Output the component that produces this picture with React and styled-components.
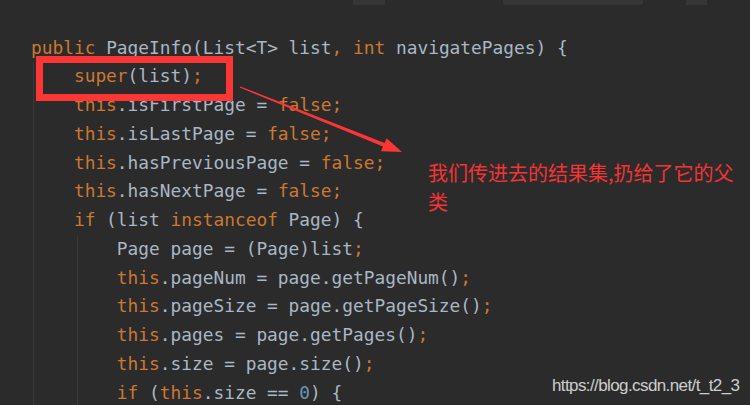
import styled, { createGlobalStyle } from 'styled-components';

const GlobalStyle = createGlobalStyle`
  html, body {
    margin: 0;
    padding: 0;
    background: #2b2b2b;
  }
`;

const Editor = styled.div`
  position: relative;
  width: 750px;
  height: 405px;
  overflow: hidden;
  background: #2b2b2b;
  padding-left: 31px;
  box-sizing: border-box;
`;

const Code = styled.div`
  margin-top: -24px;
  font-family: "DejaVu Sans Mono", "Liberation Mono", monospace;
  font-size: 17.84px;
  line-height: 28.75px;
  color: #a9b7c6;
  white-space: pre;
`;

const Line = styled.div`
  height: 28.75px;
`;

const Block = styled.div`
  margin-left: ${(p) => p.$offset}px;
  padding-left: calc(4ch - ${(p) => p.$offset + 1}px);
  border-left: 1px solid #383838;
`;

const Kw = styled.span`
  color: #cc7832;
`;

const Num = styled.span`
  color: #6897bb;
`;

const Usage = styled.span`
  display: inline-block;
  height: 28.75px;
  vertical-align: top;
  background: #363636;
  border-radius: ${(p) => (p.$round ? '3px' : '0')};
`;

const Frame = styled.div`
  position: absolute;
  left: 36px;
  top: 56px;
  width: 197px;
  height: 45px;
  border: 7px solid #fc3535;
  box-sizing: border-box;
`;

const Arrow = styled.svg`
  position: absolute;
  left: 0;
  top: 0;
  pointer-events: none;
`;

const Note = styled.div`
  position: absolute;
  left: 428px;
  top: 158px;
  width: 312px;
  font-family: "Noto Sans CJK SC", "Liberation Sans", sans-serif;
  font-size: 20px;
  line-height: 29px;
  color: #f43434;
`;

const Watermark = styled.div`
  position: absolute;
  left: 552px;
  top: 377px;
  font-family: "Liberation Sans", Arial, sans-serif;
  font-size: 17px;
  line-height: 17px;
  letter-spacing: -0.6px;
  color: #cdcdcd;
`;

export default function App() {
  return (
    <>
      <GlobalStyle />
      <Editor>
        <Code>
          <Line>
            <Kw>public</Kw> PageInfo(List&lt;T&gt; list) <Usage>{'{ }'}</Usage>
            {'           '}
            <Usage $round>this(list, 8)</Usage>
            {'    '}
            <Usage>;{'}'}</Usage>
          </Line>
          <Line />
          <Line>
            <Kw>public</Kw> PageInfo(List&lt;T&gt; list<Kw>,</Kw> <Kw>int</Kw> navigatePages) {'{'}
          </Line>
          <Block $offset={2}>
            <Line>
              <Kw>super</Kw>(list)<Kw>;</Kw>
            </Line>
            <Line>
              <Kw>this</Kw>.isFirstPage = <Kw>false;</Kw>
            </Line>
            <Line>
              <Kw>this</Kw>.isLastPage = <Kw>false;</Kw>
            </Line>
            <Line>
              <Kw>this</Kw>.hasPreviousPage = <Kw>false;</Kw>
            </Line>
            <Line>
              <Kw>this</Kw>.hasNextPage = <Kw>false;</Kw>
            </Line>
            <Line>
              <Kw>if</Kw> (list <Kw>instanceof</Kw> Page) {'{'}
            </Line>
            <Block $offset={3}>
              <Line>
                Page page = (Page)list<Kw>;</Kw>
              </Line>
              <Line>
                <Kw>this</Kw>.pageNum = page.getPageNum()<Kw>;</Kw>
              </Line>
              <Line>
                <Kw>this</Kw>.pageSize = page.getPageSize()<Kw>;</Kw>
              </Line>
              <Line>
                <Kw>this</Kw>.pages = page.getPages()<Kw>;</Kw>
              </Line>
              <Line>
                <Kw>this</Kw>.size = page.size()<Kw>;</Kw>
              </Line>
              <Line>
                <Kw>if</Kw> (<Kw>this</Kw>.size == <Num>0</Num>) {'{'}
              </Line>
            </Block>
          </Block>
        </Code>

        <Frame />
        <Arrow width="750" height="405" viewBox="0 0 750 405">
          <polygon
            fill="#fc3535"
            points="240.3,86.4 384.6,142.9 386.6,138.2 402,152 381,151.3 383,146.6 239.7,87.6"
          />
        </Arrow>
        <Note>我们传进去的结果集,扔给了它的父类</Note>
        <Watermark>https://blog.csdn.net/t_t2_3</Watermark>
      </Editor>
    </>
  );
}
